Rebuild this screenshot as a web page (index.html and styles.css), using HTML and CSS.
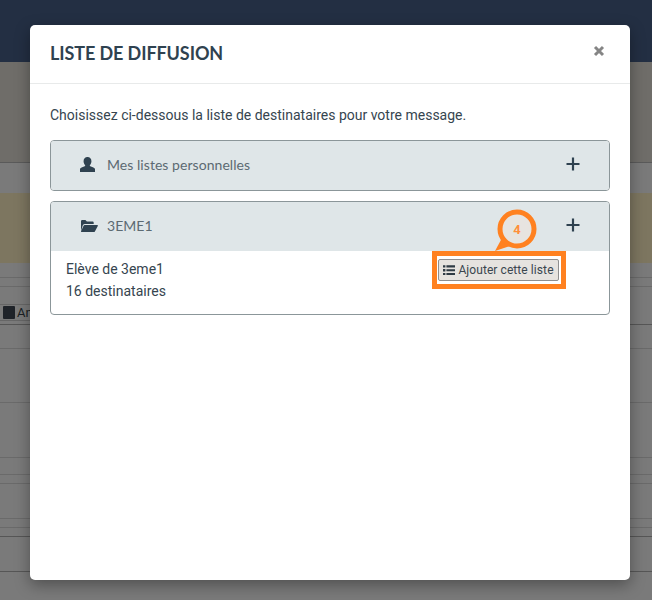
FILE: index.html
```html
<!DOCTYPE html>
<html lang="fr">
<head>
<meta charset="utf-8">
<title>Liste de diffusion</title>
<link rel="stylesheet" href="styles.css">
</head>
<body>
<div class="page">
  <div class="bg-nav"></div>
  <div class="bg-hero"></div>
  <div class="bg-row h30"></div>
  <div class="bg-alert"></div>
  <div class="bg-row h15"></div>
  <div class="bg-row h9"></div>
  <div class="bg-row h38">
    <span class="bg-btn"><span class="bg-book"></span>An</span>
  </div>
  <div class="bg-row h24"></div>
  <div class="bg-row h54"></div>
  <div class="bg-row h55"></div>
  <div class="bg-row h17"></div>
  <div class="bg-row h9"></div>
  <div class="bg-row h35"></div>
  <div class="bg-row h9"></div>
  <div class="bg-row h9 strong"></div>
  <div class="bg-row h35 strong"></div>
</div>

<div class="modal">
  <header class="modal-head">
    <h1 class="modal-title">LISTE DE DIFFUSION</h1>
    <svg class="close" viewBox="0 0 12 12" aria-label="Fermer"><path d="M2 2l8 8M10 2l-8 8"/></svg>
  </header>
  <div class="modal-body">
    <p class="intro">Choisissez ci-dessous la liste de destinataires pour votre message.</p>
    <section class="panel">
      <div class="panel-head">
        <svg class="icon" viewBox="0 0 16 16"><path d="M8 0c2.600 0 4.200 1.900 4.200 4.500 0 1.500-.6 3-1.500 3.900-.4.500-.3 1.100.3 1.400l3.300 1.300c1.200.5 1.700 1.200 1.700 2.300V16H0v-2.600c0-1.100.5-1.800 1.700-2.300L5 9.800c.6-.3.700-.9.300-1.400-.9-.9-1.500-2.400-1.500-3.900C3.800 1.900 5.400 0 8 0z"/></svg>
        <span class="panel-label">Mes listes personnelles</span>
        <svg class="plus" viewBox="0 0 14 14"><path d="M7 .5v13M.5 7h13"/></svg>
      </div>
    </section>
    <section class="panel">
      <div class="panel-head">
        <svg class="icon folder" viewBox="0 0 18 14"><path d="M1 12V2.300C1 1.600 1.500 1 2.200 1h3.200l1.500 1.600h5.600c.7 0 1.200.5 1.200 1.200V5H5c-1 0-1.700.4-2.200 1.200z"/><path d="M4.600 6h12.700c.5 0 .8.500.5 1l-2.900 5.500c-.3.400-.6.500-1 .5H1.500c-.5 0-.7-.4-.5-.8l2.600-5.500c.2-.5.600-.7 1-.7z"/></svg>
        <span class="panel-label">3EME1</span>
        <svg class="plus" viewBox="0 0 14 14"><path d="M7 .5v13M.5 7h13"/></svg>
      </div>
      <div class="panel-body">
        <div class="list-info">
          <div>Elève de 3eme1</div>
          <div>16 destinataires</div>
        </div>
        <button class="add-btn" type="button">
          <svg class="list-icon" viewBox="0 0 13 11"><path d="M0 0h2.600v2.600H0zM3.700 .2H13v2.200H3.700zM0 4.200h2.600v2.600H0zM3.700 4.400H13v2.200H3.700zM0 8.400h2.600V11H0zM3.700 8.600H13v2.200H3.700z"/></svg>Ajouter cette liste
        </button>
      </div>
    </section>
  </div>
  <div class="callout">
    <svg class="callout-shape" viewBox="0 0 44 50">
      <path class="callout-tail" d="M9 30 L2 43 L17 38 Z"/>
      <circle cx="24" cy="21" r="17"/>
    </svg>
    <span class="callout-num">4</span>
  </div>
  <div class="highlight"></div>
</div>
</body>
</html>
```
FILE: styles.css
```css
* { box-sizing: border-box; }
html, body { margin: 0; padding: 0; height: 600px; overflow: hidden; background: #7a7a7a; }
body { font-family: Roboto, "Liberation Sans", sans-serif; color: #36454f; }

.page { display: flex; flex-direction: column; height: 600px; }
.bg-nav { height: 62px; background: #232f43; flex: none; }
.bg-hero { height: 101px; background: #6f6d69; border-bottom: 1px solid #5a5a5a; flex: none; }
.bg-alert { height: 70px; background: #7d7660; flex: none; }
.bg-row { border-bottom: 1px solid #6a6a6a; background: #7a7a7a; flex: none; }
.bg-row.strong { border-bottom-color: #565656; }
.h30 { height: 30px; border-bottom: 0; }
.h15 { height: 15px; }
.h38 { height: 38px; display: flex; align-items: flex-end; padding-bottom: 3px; border-bottom-color: #565656; }
.h24 { height: 24px; }
.h54 { height: 54px; }
.h55 { height: 55px; }
.h17 { height: 17px; }
.h9 { height: 9px; }
.h35 { height: 35px; }
.bg-btn { display: flex; align-items: center; gap: 2px; height: 17px; margin-left: -2px; padding-left: 4px; border: 1px solid #666; border-radius: 2px; font-size: 13px; color: #1b1f24; }
.bg-book { width: 12px; height: 13px; background: #1f2329; border-radius: 1px; }

.modal { position: absolute; left: 30px; top: 25px; width: 600px; height: 555px; background: #fff; border-radius: 5px; box-shadow: 0 5px 15px rgba(0,0,0,.35); }
.modal-head { height: 59px; display: flex; align-items: center; justify-content: space-between; padding: 0 25px 0 20px; border-bottom: 1px solid #e8eaea; }
.modal-title { margin: 0 0 3px; font: 700 18px/24px Lato, "Open Sans", sans-serif; letter-spacing: -.1px; color: #2f4250; }
.close { width: 12px; height: 12px; margin-bottom: 6px; fill: none; stroke: #858585; stroke-width: 3; }
.modal-body { padding: 21px 20px 0; }
.intro { margin: 0 0 15px; font-size: 14px; line-height: 20px; color: #36454f; }

.panel { border: 1px solid #8b9699; border-radius: 4px; margin-bottom: 10px; overflow: hidden; }
.panel-head { height: 49px; display: flex; align-items: center; padding: 0 29px; background: #dfe6e8; }
.icon { width: 15px; height: 15px; fill: #2f4250; flex: none; margin-bottom: 2px; }
.icon.folder { width: 18px; height: 14px; margin: 0 -3px 2px 0; }
.panel-label { margin: 0 0 2px 12px; flex: 1; font: 400 14px/20px Lato, "Open Sans", sans-serif; letter-spacing: .05px; color: #5c6a72; }
.plus { width: 14px; height: 14px; margin-bottom: 4px; fill: none; stroke: #2f4250; stroke-width: 2.200; }
.panel-body { position: relative; height: 63px; padding: 7px 15px; font-size: 14px; line-height: 22px; color: #36454f; }
.add-btn { position: absolute; left: 387px; top: 8px; height: 22px; width: 121px; padding: 0; display: flex; align-items: center; justify-content: center; gap: 3px; background: #e6e3df; border: 1px solid #8f8f8f; border-radius: 2px; font: 400 12px Roboto, sans-serif; letter-spacing: .08px; color: #3a464e; }
.list-icon { width: 12px; height: 10.500px; fill: #2f3b44; }

.callout { position: absolute; left: 463px; top: 183px; width: 44px; height: 50px; }
.callout-shape { display: block; width: 44px; height: 50px; }
.callout-shape circle { fill: #e7e4e0; stroke: #ff8120; stroke-width: 5; }
.callout-tail { fill: #ff8120; }
.callout-num { position: absolute; left: 24px; top: 21px; transform: translate(-50%, -50%); font: 700 13px Roboto, sans-serif; color: #ff8f3a; }
.highlight { position: absolute; left: 402px; top: 226px; width: 134px; height: 38px; border: 5px solid #ff8120; pointer-events: none; }
```
